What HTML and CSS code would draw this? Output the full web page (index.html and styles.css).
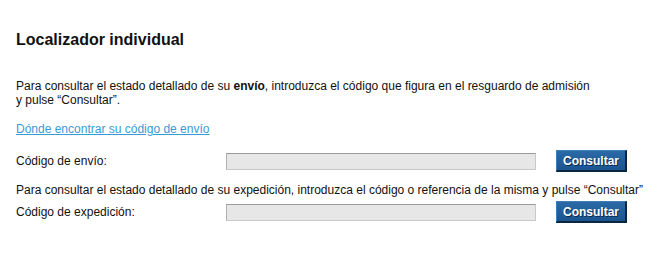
FILE: index.html
```html
<!DOCTYPE html>
<html lang="es">
<head>
<meta charset="utf-8">
<title>Localizador individual</title>
<link rel="stylesheet" href="styles.css">
</head>
<body>
<div class="page">
  <h1 class="title">Localizador individual</h1>
  <p class="intro">Para consultar el estado detallado de su <b>envío</b>, introduzca el código que figura en el resguardo de admisión<br>y pulse “Consultar”.</p>
  <a class="help-link" href="#">Dónde encontrar su código de envío</a>
  <form class="row row-first">
    <label class="label">Código de envío:</label>
    <input class="field" type="text">
    <button class="btn" type="button">Consultar</button>
  </form>
  <p class="intro2">Para consultar el estado detallado de su expedición, introduzca el código o referencia de la misma y pulse “Consultar”</p>
  <form class="row row-second">
    <label class="label">Código de expedición:</label>
    <input class="field" type="text">
    <button class="btn" type="button">Consultar</button>
  </form>
</div>
</body>
</html>
```
FILE: styles.css
```css
html, body {
  margin: 0;
  padding: 0;
  background: #ffffff;
}
body {
  font-family: "Liberation Sans", Arial, Helvetica, sans-serif;
  font-size: 12px;
  color: #111111;
}
.page {
  padding: 30px 0 0 16px;
  width: 643px;
}
.title {
  margin: 0;
  font-size: 16px;
  font-weight: bold;
  line-height: 20px;
  color: #111111;
}
.intro {
  margin: 29px 0 0;
  line-height: 14px;
}
.intro b {
  font-weight: bold;
}
.help-link {
  display: inline-block;
  margin-top: 15px;
  color: #3a9ad6;
  text-decoration: underline;
  line-height: 14px;
}
.row {
  display: flex;
  align-items: center;
  margin: 0;
}
.row-first {
  margin-top: 14px;
}
.label {
  width: 210px;
  line-height: 14px;
}
.field {
  box-sizing: border-box;
  width: 310px;
  height: 17px;
  margin: 0;
  padding: 0 3px;
  background: #e7e7e7;
  border: 1px solid #c8c8c8;
  border-top-color: #9a9a9a;
  border-left-color: #b0b0b0;
  font: inherit;
}
.btn {
  box-sizing: border-box;
  width: 71px;
  height: 22px;
  margin: 0 0 0 20px;
  padding: 0;
  background: linear-gradient(#2a6aa6, #1b5590);
  border: 1px solid #3f7fb8;
  border-right-color: #0b2740;
  border-bottom-color: #0b2740;
  border-right-width: 2px;
  border-bottom-width: 2px;
  color: #ffffff;
  font-family: "Liberation Sans", Arial, Helvetica, sans-serif;
  font-size: 12px;
  font-weight: bold;
  text-shadow: 1px 1px 0 #0a2a48;
  cursor: pointer;
}
.intro2 {
  margin: 11px 0 0;
  line-height: 14px;
}
.row-second {
  margin-top: 4px;
}
```
